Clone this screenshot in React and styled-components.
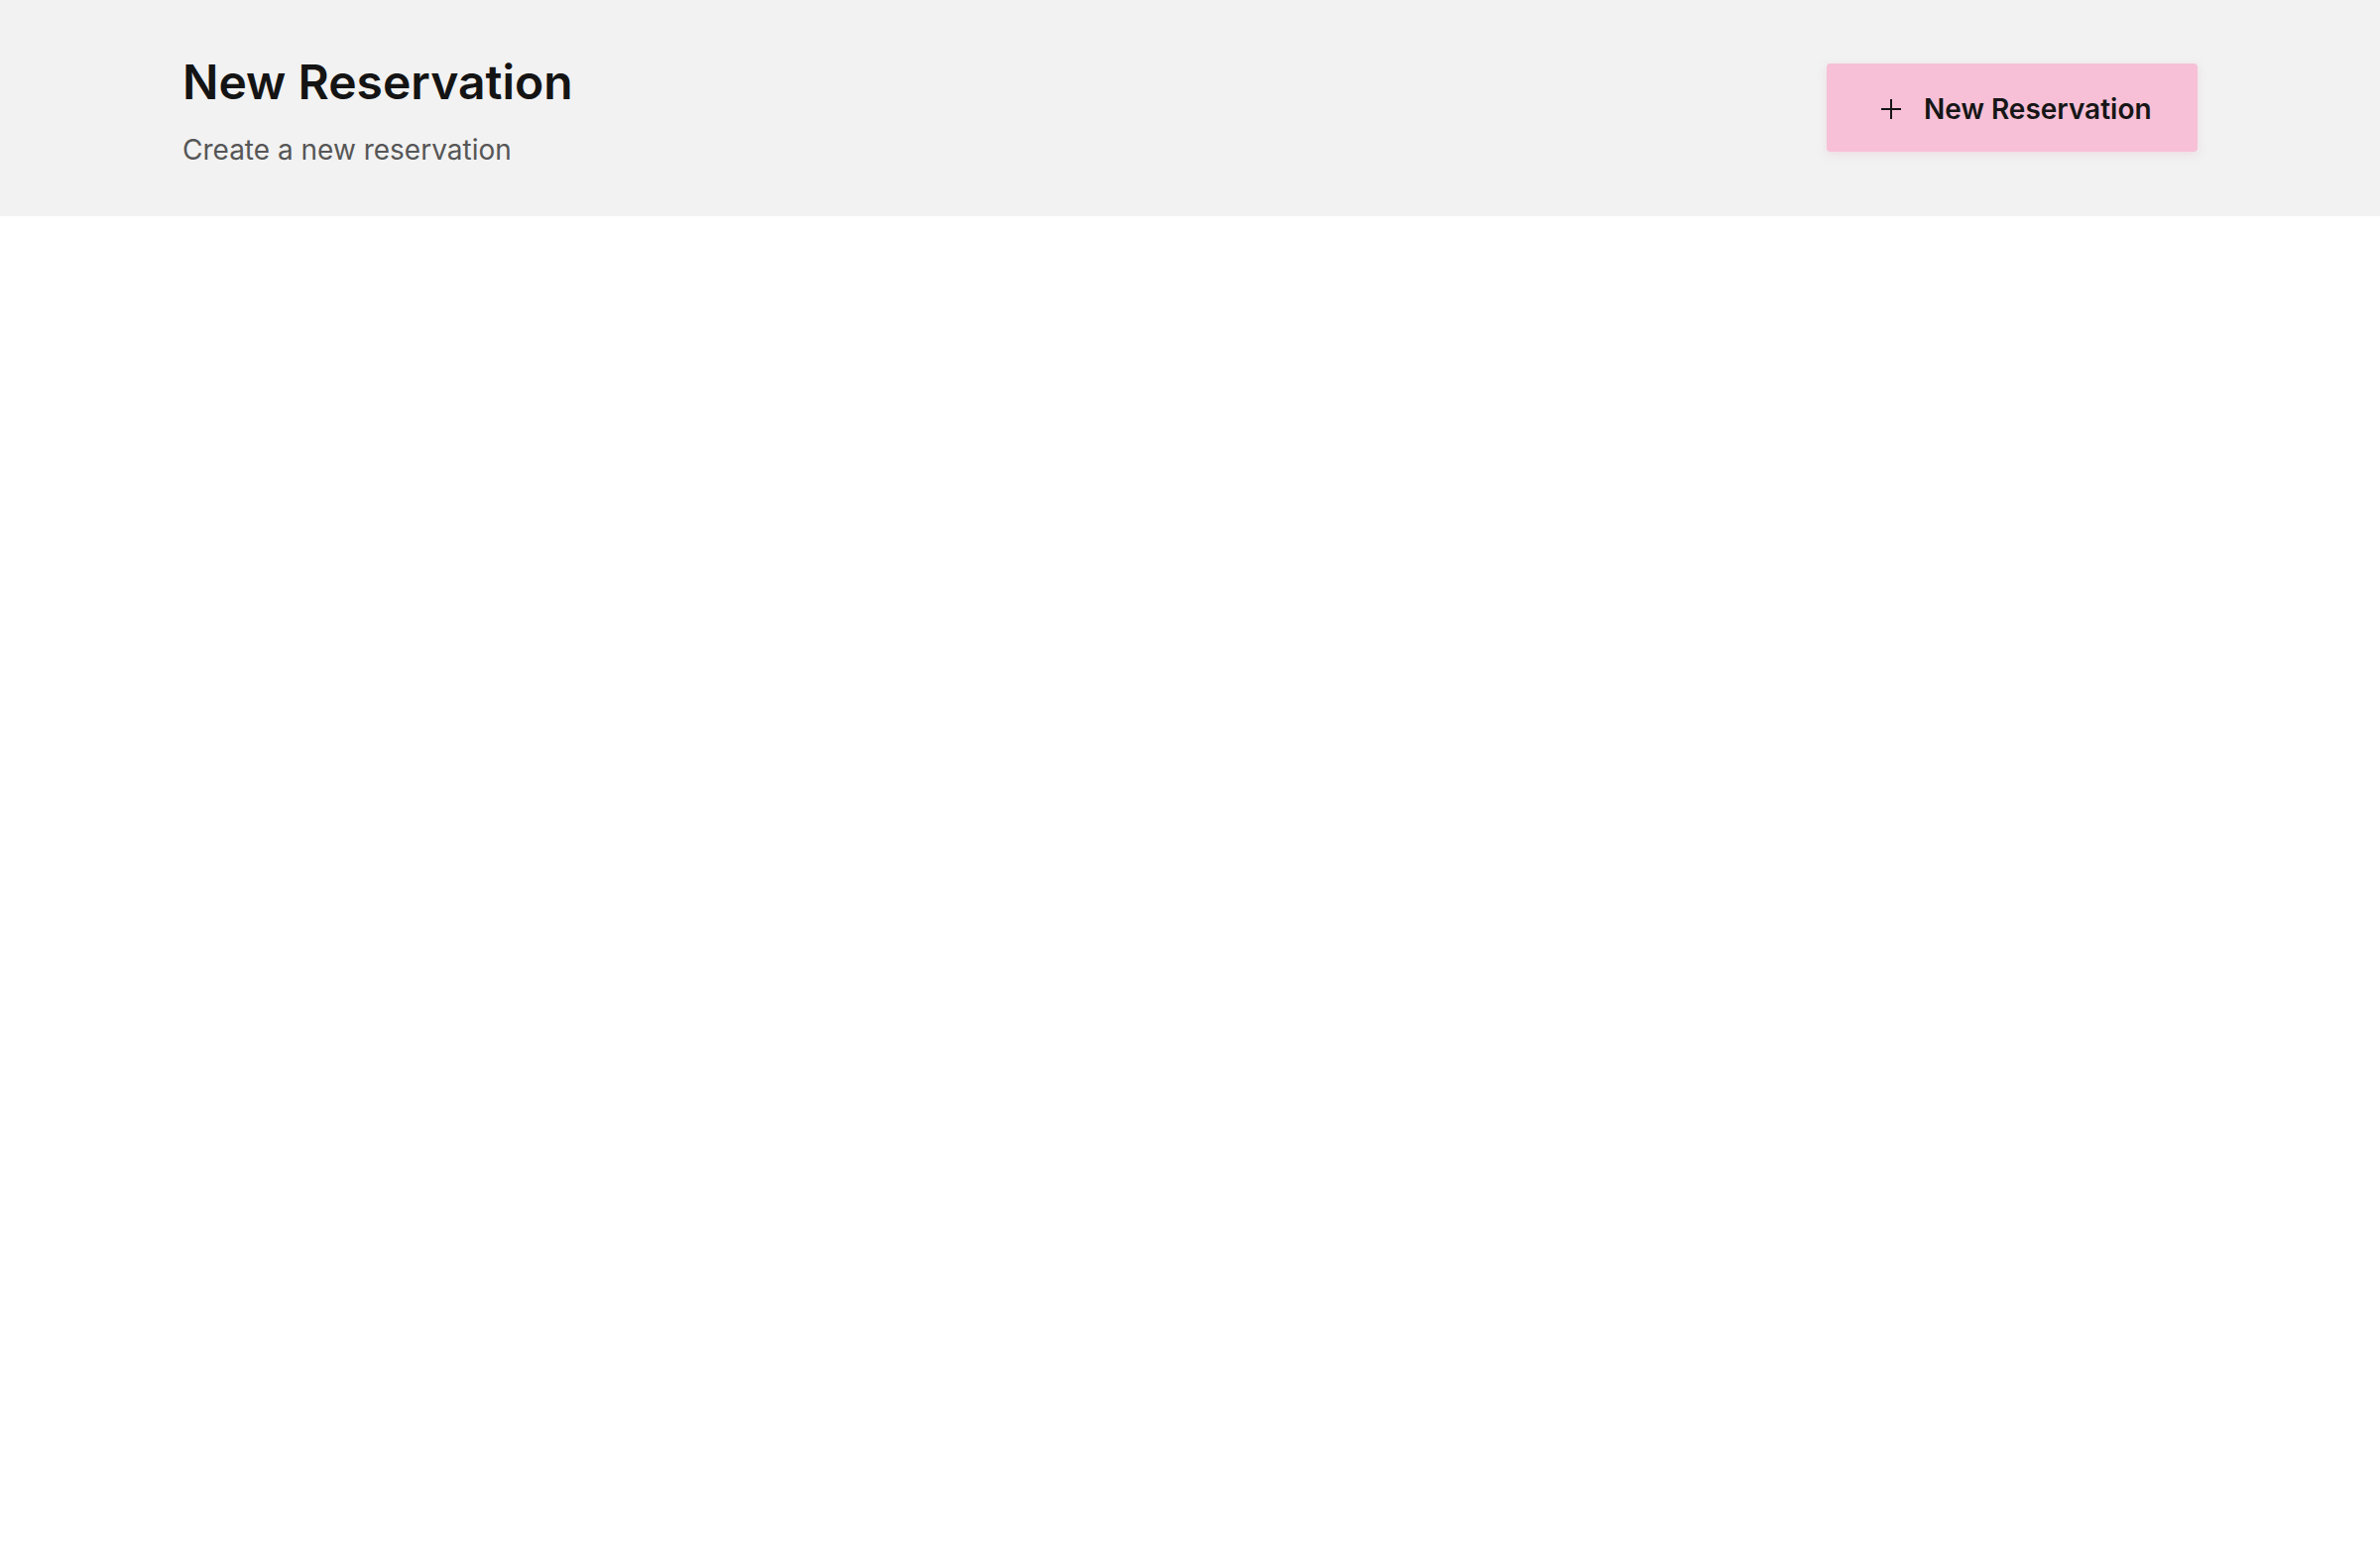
import React from 'react';
import styled, { createGlobalStyle } from 'styled-components';

const GlobalStyle = createGlobalStyle`
  html, body {
    margin: 0;
    padding: 0;
    background: #ffffff;
    font-family: Inter, "Noto Sans", sans-serif;
  }
`;

const PlusIcon = () => (
  <svg width="22" height="22" viewBox="0 0 22 22" fill="none">
    <path d="M11 1v20M1 11h20" stroke="#151515" strokeWidth="2" />
  </svg>
);

const App = () => {
  return (
    <>
      <GlobalStyle />
      <Header>
        <HeaderInner>
          <TitleBlock>
            <Title>New Reservation</Title>
            <Subtitle>Create a new reservation</Subtitle>
          </TitleBlock>
          <CreateButton>
            <PlusIcon />
            New Reservation
          </CreateButton>
        </HeaderInner>
      </Header>
    </>
  );
};

export default App;

const Header = styled.header`
  background: #f2f2f2;
  height: 218px;
  box-sizing: border-box;
  padding: 0 184px;
`;

const HeaderInner = styled.div`
  display: flex;
  align-items: flex-start;
  justify-content: space-between;
  height: 100%;
`;

const TitleBlock = styled.div`
  display: flex;
  flex-direction: column;
  padding-top: 53px;
`;

const Title = styled.h1`
  margin: 0;
  font-size: 48px;
  line-height: 60px;
  font-weight: 600;
  color: #141414;
`;

const Subtitle = styled.p`
  margin: 20px 0 0;
  font-size: 28px;
  line-height: 36px;
  font-weight: 400;
  color: #565656;
`;

const CreateButton = styled.button`
  display: flex;
  align-items: center;
  gap: 22px;
  margin-top: 64px;
  height: 89px;
  width: 374px;
  box-sizing: border-box;
  padding: 3px 0 0 54px;
  border: none;
  border-radius: 4px;
  background: #f7c0d7;
  box-shadow: 0 3px 10px rgba(220, 160, 185, 0.25);
  font-family: Inter, "Noto Sans", sans-serif;
  font-size: 28px;
  font-weight: 600;
  color: #161616;
  cursor: pointer;
`;
